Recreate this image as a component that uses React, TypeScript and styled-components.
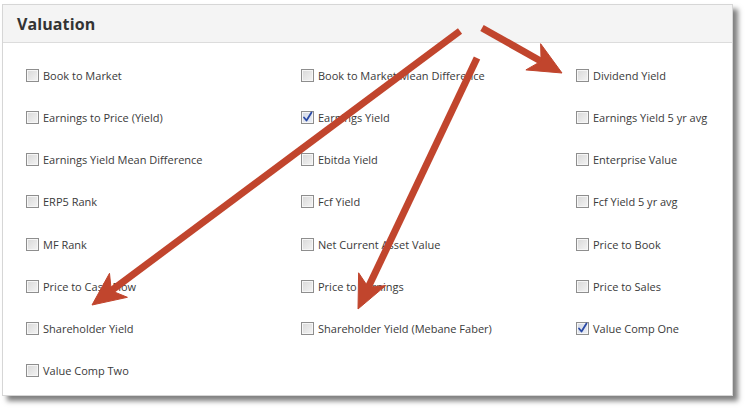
import React from "react";
import styled, { createGlobalStyle } from "styled-components";

const Global = createGlobalStyle`
  html, body { margin: 0; padding: 0; background: #ffffff; }
  body { font-family: "Open Sans", "Liberation Sans", sans-serif; }
`;

const Page = styled.div`
  position: relative;
  width: 749px;
  height: 411px;
  padding: 4px 0 0 2px;
  box-sizing: border-box;
`;

const Panel = styled.section`
  width: 731px;
  height: 392px;
  box-sizing: border-box;
  border: 1px solid #d6d6d6;
  background: #ffffff;
  box-shadow: 5px 5px 5px rgba(0, 0, 0, 0.5);
  display: flex;
  flex-direction: column;
`;

const Header = styled.header`
  height: 38px;
  box-sizing: border-box;
  background: #f4f4f4;
  border-bottom: 1px solid #dcdcdc;
  display: flex;
  align-items: center;
  padding-left: 14px;
`;

const Title = styled.h2`
  margin: 0;
  font-family: "Open Sans", "Liberation Sans", sans-serif;
  font-weight: 700;
  font-size: 16px;
  color: #333333;
  letter-spacing: 0.1px;
`;

const Body = styled.div`
  display: grid;
  grid-template-columns: 275px 275px 1fr;
  grid-template-rows: repeat(8, 42.15px);
  padding: 11.5px 0 0 23px;
`;

const Item = styled.label`
  display: flex;
  align-items: center;
  gap: 4px;
  font-size: 11px;
  color: #3a3a3a;
  line-height: 15px;
`;

const Box = styled.span<{ $checked: boolean }>`
  position: relative;
  width: 13px;
  height: 13px;
  box-sizing: border-box;
  border: 1px solid #8e8e8e;
  background: ${(p) =>
    p.$checked
      ? "linear-gradient(135deg, #d3d9e6 0%, #eceff6 100%)"
      : "linear-gradient(135deg, #d8d8d8 0%, #f4f4f4 100%)"};
  box-shadow: inset 0 0 0 1px #f6f6f6;
  flex: none;
`;

const Check = styled.svg`
  position: absolute;
  left: 0px;
  top: -1px;
  width: 11px;
  height: 12px;
`;

const ArrowLayer = styled.svg`
  position: absolute;
  left: 0;
  top: 0;
  pointer-events: none;
`;

type Opt = { label: string; checked?: boolean };

const options: Opt[] = [
  { label: "Book to Market" },
  { label: "Book to Market Mean Difference" },
  { label: "Dividend Yield" },
  { label: "Earnings to Price (Yield)" },
  { label: "Earnings Yield", checked: true },
  { label: "Earnings Yield 5 yr avg" },
  { label: "Earnings Yield Mean Difference" },
  { label: "Ebitda Yield" },
  { label: "Enterprise Value" },
  { label: "ERP5 Rank" },
  { label: "Fcf Yield" },
  { label: "Fcf Yield 5 yr avg" },
  { label: "MF Rank" },
  { label: "Net Current Asset Value" },
  { label: "Price to Book" },
  { label: "Price to Cash Flow" },
  { label: "Price to Earnings" },
  { label: "Price to Sales" },
  { label: "Shareholder Yield" },
  { label: "Shareholder Yield (Mebane Faber)" },
  { label: "Value Comp One", checked: true },
  { label: "Value Comp Two" },
];

function arrow(x1: number, y1: number, x2: number, y2: number) {
  const dx = x2 - x1;
  const dy = y2 - y1;
  const len = Math.sqrt(dx * dx + dy * dy);
  const ux = dx / len;
  const uy = dy / len;
  const px = -uy;
  const py = ux;
  const headLen = 33;
  const halfW = 15;
  const notch = 24;
  const bx = x2 - ux * headLen;
  const by = y2 - uy * headLen;
  const nx = x2 - ux * notch;
  const ny = y2 - uy * notch;
  const pts = [
    [x2, y2],
    [bx + px * halfW, by + py * halfW],
    [nx, ny],
    [bx - px * halfW, by - py * halfW],
  ]
    .map((p) => p.map((v) => v.toFixed(1)).join(","))
    .join(" ");
  return { line: { x1, y1, x2: nx + ux * 2, y2: ny + uy * 2 }, pts };
}

const arrows = [
  arrow(460, 31, 92, 305),
  arrow(477, 58, 358, 309),
  arrow(482, 28, 562, 73),
];

export default function App() {
  return (
    <Page>
      <Global />
      <Panel>
        <Header>
          <Title>Valuation</Title>
        </Header>
        <Body>
          {options.map((o) => (
            <Item key={o.label}>
              <Box $checked={!!o.checked}>
                {o.checked && (
                  <Check viewBox="0 0 11 12">
                    <path
                      d="M2 6.5 L4.5 9.5 L9.5 1.5"
                      fill="none"
                      stroke="#2a4aa6"
                      strokeWidth="1.8"
                      strokeLinecap="round"
                      strokeLinejoin="round"
                    />
                  </Check>
                )}
              </Box>
              {o.label}
            </Item>
          ))}
        </Body>
      </Panel>
      <ArrowLayer width="749" height="411" viewBox="0 0 749 411">
        {arrows.map((a, i) => (
          <g key={i} fill="#c1452d" stroke="#c1452d">
            <line {...a.line} strokeWidth="7" strokeLinecap="butt" />
            <polygon points={a.pts} strokeWidth="1" strokeLinejoin="miter" />
          </g>
        ))}
      </ArrowLayer>
    </Page>
  );
}
